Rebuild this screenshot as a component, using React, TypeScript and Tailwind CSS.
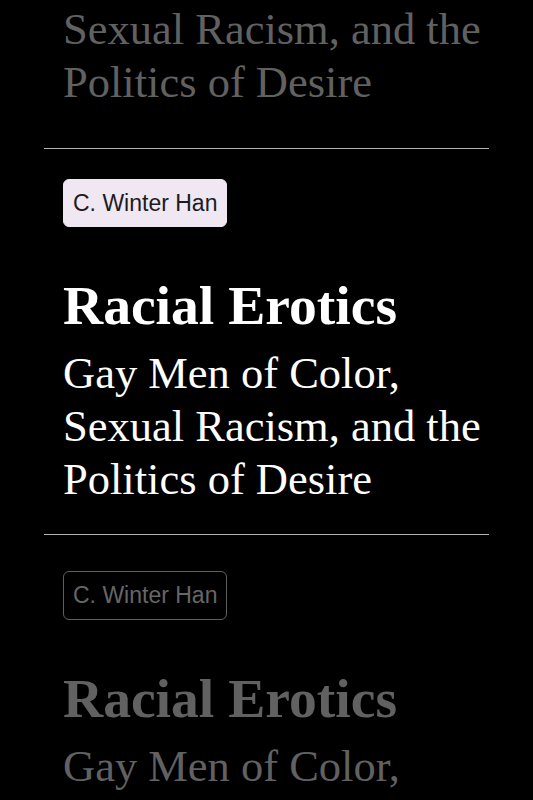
import { Fragment } from 'react'

type Book = {
  author: string
  title: string
  subtitle: string
}

const book: Book = {
  author: 'C. Winter Han',
  title: 'Racial Erotics',
  subtitle: 'Gay Men of Color, Sexual Racism, and the Politics of Desire',
}

// list is scrolled so the middle entry sits in focus
const entries = [
  { book, active: false },
  { book, active: true },
  { book, active: false },
]

// gaps around each divider (subtitle -> rule, rule -> next chip)
const dividers = [
  { className: 'mt-[39px] mb-[30px]' },
  { className: 'mt-[28px] mb-[36px]' },
]

function BookEntry({ book, active }: { book: Book; active: boolean }) {
  return (
    <div className="pl-[19px]">
      <span
        className={
          active
            ? 'inline-flex h-[48px] items-center rounded-[6px] border border-[#efe7f2] bg-[#efe7f2] px-[9px] text-[23px] leading-none text-[#1c1b1f]'
            : 'inline-flex h-[49px] items-center rounded-[6px] border border-[#5f5f5f] px-[9px] text-[23px] leading-none text-[#666666]'
        }
        style={{ fontFamily: '"Liberation Sans", Arial, sans-serif' }}
      >
        {book.author}
      </span>
      <h2
        className={`mt-[45px] text-[55.6px] font-bold leading-[66px] ${
          active ? 'text-white' : 'text-[#616161]'
        }`}
      >
        {book.title}
      </h2>
      <p
        className={`mt-[9px] text-[44.5px] leading-[53px] ${
          active ? 'text-white' : 'text-[#616161]'
        }`}
      >
        {book.subtitle}
      </p>
    </div>
  )
}

export default function App() {
  return (
    <div
      className="h-[800px] w-full overflow-hidden bg-black px-[44px]"
      style={{ fontFamily: '"Liberation Serif", "Times New Roman", serif' }}
    >
      <div className="mt-[-219px]">
        {entries.map((entry, i) => (
          <Fragment key={i}>
            <BookEntry book={entry.book} active={entry.active} />
            {i < dividers.length && (
              <hr className={`border-t border-[#b4b4b4] ${dividers[i].className}`} />
            )}
          </Fragment>
        ))}
      </div>
    </div>
  )
}
